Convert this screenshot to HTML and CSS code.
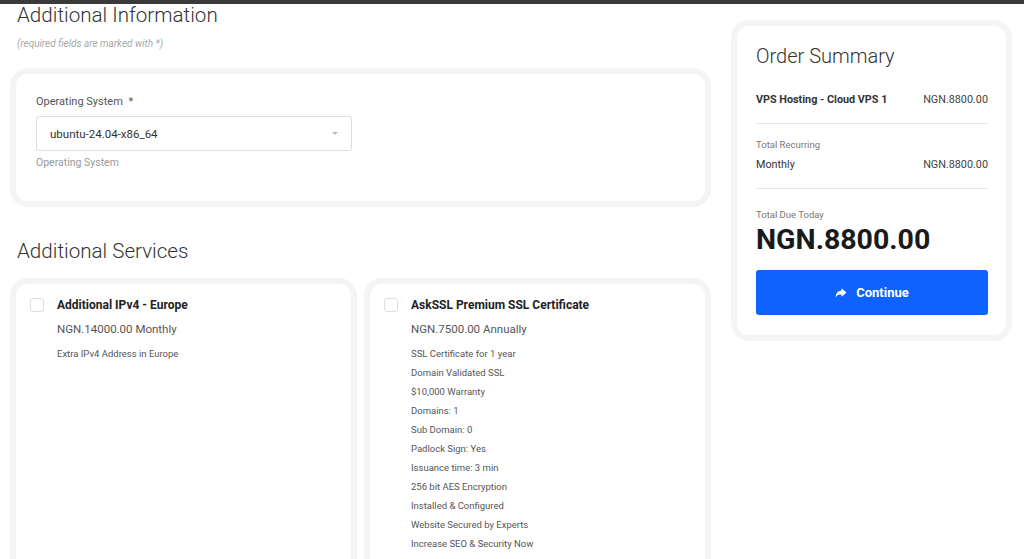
FILE: index.html
```html
<!DOCTYPE html>
<html>
    <head>
        <meta charset="utf-8">
        <title>Checkout - Additional Information</title>
        <link rel="stylesheet" href="styles.css">
    </head>
    <body>
        <div class="topbar"></div>
        <div class="page">
            <div class="main">
                <h2 class="title">Additional Information</h2>
                <p class="hint">(required fields are marked with *)</p>
                <div class="card config">
                    <label class="field-label">Operating System <span class="req">*</span></label>
                    <div class="select">
                        <span>ubuntu-24.04-x86_64</span>
                        <span class="caret"></span>
                    </div>
                    <p class="field-help">Operating System</p>
                </div>

                <h2 class="title services-title">Additional Services</h2>
                <div class="services">
                    <div class="card service">
                        <span class="check"></span>
                        <div class="service-body">
                            <h4>Additional IPv4 - Europe</h4>
                            <p class="price">NGN.14000.00 Monthly</p>
                            <ul class="desc">
                                <li>Extra IPv4 Address in Europe</li>
                            </ul>
                        </div>
                    </div>
                    <div class="card service">
                        <span class="check"></span>
                        <div class="service-body">
                            <h4>AskSSL Premium SSL Certificate</h4>
                            <p class="price">NGN.7500.00 Annually</p>
                            <ul class="desc">
                                <li>SSL Certificate for 1 year</li>
                                <li>Domain Validated SSL</li>
                                <li>$10,000 Warranty</li>
                                <li>Domains: 1</li>
                                <li>Sub Domain: 0</li>
                                <li>Padlock Sign: Yes</li>
                                <li>Issuance time: 3 min</li>
                                <li>256 bit AES Encryption</li>
                                <li>Installed &amp; Configured</li>
                                <li>Website Secured by Experts</li>
                                <li>Increase SEO &amp; Security Now</li>
                            </ul>
                        </div>
                    </div>
                </div>
            </div>

            <div class="sidebar">
                <div class="card summary">
                    <h3>Order Summary</h3>
                    <div class="row product">
                        <span>VPS Hosting - Cloud VPS 1</span>
                        <span class="amount">NGN.8800.00</span>
                    </div>
                    <div class="divider"></div>
                    <p class="small-label">Total Recurring</p>
                    <div class="row">
                        <span>Monthly</span>
                        <span class="amount">NGN.8800.00</span>
                    </div>
                    <div class="divider"></div>
                    <p class="small-label due-label">Total Due Today</p>
                    <div class="total">NGN.8800.00</div>
                    <button class="btn-continue">
                        <svg width="12" height="11" viewBox="0 0 22 20"><path d="M12 2 L21 10 L12 18 V13.5 C7 13.5 3.5 14.5 1 19 C1.5 12 5 7 12 6.5 Z" fill="#fff"/></svg>
                        Continue
                    </button>
                </div>
            </div>
        </div>
    </body>
</html>
```

FILE: styles.css
```css
*{
    margin: 0;
    padding: 0;
    box-sizing: border-box;
}
html,body{
    height: 100%;
    overflow: hidden;
}
body{
    background: #fff;
    font-family: Roboto, "Liberation Sans", sans-serif;
    color: #333;
}
.topbar{
    height: 4px;
    background: #3a3a3a;
}
.page{
    display: flex;
    gap: 20px;
    padding: 0 12px 0 10px;
}
.main{
    width: 701px;
}
.sidebar{
    width: 281px;
    padding-top: 16px;
}
.card{
    background: #fff;
    border: 6px solid #f4f4f4;
    border-radius: 18px;
}
.title{
    font-size: 20.6px;
    font-weight: 300;
    line-height: 22px;
    color: #333;
    padding-left: 7px;
}
.hint{
    font-size: 10px;
    font-style: italic;
    color: #a8a8a8;
    line-height: 12px;
    padding-left: 7px;
    margin-top: 12px;
}
.config{
    margin-top: 18px;
    padding: 21px 20px 31px;
}
.field-label{
    display: block;
    font-size: 11px;
    line-height: 14px;
    color: #555;
}
.req{
    margin-left: 3px;
}
.select{
    display: flex;
    align-items: center;
    justify-content: space-between;
    width: 316px;
    height: 35px;
    margin-top: 7px;
    padding: 0 13px;
    border: 1px solid #ddd;
    border-radius: 3px;
    font-size: 11.5px;
    color: #333;
}
.caret{
    width: 0;
    height: 0;
    border-left: 3px solid transparent;
    border-right: 3px solid transparent;
    border-top: 3px solid #bbb;
}
.field-help{
    font-size: 10.5px;
    line-height: 14px;
    color: #999;
    margin-top: 5px;
}
.services-title{
    margin-top: 31px;
    line-height: 26px;
}
.services{
    display: flex;
    gap: 7px;
    margin-top: 14px;
}
.service{
    flex: 1;
    display: flex;
    gap: 13px;
    padding: 14px 14px 20px;
    min-height: 300px;
}
.check{
    flex: none;
    width: 14px;
    height: 14px;
    border: 1px solid #ddd;
    border-radius: 3px;
}
.service-body h4{
    font-size: 12px;
    font-weight: 700;
    line-height: 14px;
    color: #222;
}
.price{
    font-size: 11.5px;
    line-height: 14px;
    color: #555;
    margin-top: 10px;
}
.desc{
    list-style: none;
    margin-top: 8px;
}
.desc li{
    font-size: 9.5px;
    line-height: 19px;
    color: #555;
}
.summary{
    padding: 18px 18px 20px 19px;
}
.summary h3{
    font-size: 20px;
    font-weight: 300;
    line-height: 24px;
    color: #333;
}
.row{
    display: flex;
    justify-content: space-between;
    font-size: 10.8px;
    line-height: 14px;
    color: #333;
}
.product{
    margin-top: 25px;
    font-weight: 700;
}
.row .amount{
    font-weight: 400;
    color: #444;
}
.divider{
    height: 1px;
    background: #e8e8e8;
    margin: 16px 0 15px;
}
.small-label{
    font-size: 9.5px;
    line-height: 12px;
    color: #777;
    margin-bottom: 7px;
}
.due-label{
    margin-top: 20px;
    margin-bottom: 3px;
}
.total{
    font-size: 28.5px;
    font-weight: 700;
    line-height: 32px;
    color: #1a1a1a;
}
.btn-continue{
    display: flex;
    align-items: center;
    justify-content: center;
    gap: 9px;
    width: 100%;
    height: 45px;
    margin-top: 14px;
    border: none;
    border-radius: 3px;
    background: #1062fe;
    color: #fff;
    font-family: Roboto, "Liberation Sans", sans-serif;
    font-size: 13px;
    font-weight: 700;
}
```
